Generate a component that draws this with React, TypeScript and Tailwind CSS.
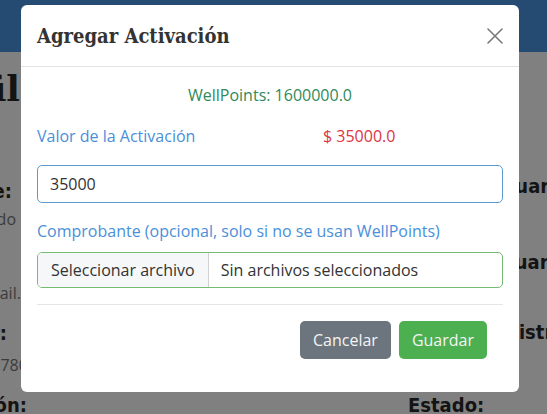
import React from 'react';

const sans = "font-['Open_Sans','Noto_Sans',sans-serif]";
const narrow = "font-['Liberation_Sans_Narrow','DejaVu_Sans_Condensed',sans-serif] font-bold";

function CloseIcon() {
  return (
    <svg width="16" height="16" viewBox="0 0 16 16" fill="none" stroke="#7a7a7a" strokeWidth="1.6" strokeLinecap="round">
      <path d="M1 1L15 15M15 1L1 15" />
    </svg>
  );
}

// page behind the dark backdrop (only the edges show)
function Backdrop() {
  return (
    <div className="flex h-full flex-col">
      <div className="h-[52px] shrink-0 bg-[#264b72]" />
      <div className="grid flex-1 grid-cols-[21px_1fr_139px]">
        <div className="flex flex-col text-[#141414]">
          <div className="mt-[16px] flex h-[40px] w-[20px] justify-end whitespace-nowrap font-['DejaVu_Serif',serif] text-[36px] font-bold leading-[40px]">
            Perfil
          </div>
          <div className={`mt-[71px] flex h-[24px] w-[12px] justify-end whitespace-nowrap text-[20px] leading-[24px] ${narrow}`}>
            Nombre:
          </div>
          <div className={`mt-[4px] flex h-[24px] w-[16px] justify-end whitespace-nowrap text-[16px] leading-[24px] text-[#3b3b3b] ${sans}`}>
            Ricardo
          </div>
          <div className={`mt-[50px] flex h-[24px] w-[53px] justify-end whitespace-nowrap text-[16px] leading-[24px] text-[#3b3b3b] ${sans}`}>
            usuario@gmail.com
          </div>
          <div className={`mt-[16px] flex h-[24px] w-[7px] justify-end whitespace-nowrap text-[20px] leading-[24px] ${narrow}`}>
            Celular:
          </div>
          <div className={`mt-[8px] flex h-[24px] w-[37px] justify-end whitespace-nowrap text-[16px] leading-[24px] text-[#3b3b3b] ${sans}`}>
            3124567809
          </div>
          <div className={`mt-[16px] flex h-[24px] w-[27px] justify-end whitespace-nowrap text-[20px] leading-[24px] ${narrow}`}>
            Dirección:
          </div>
        </div>
        <div />
        <div className={`flex flex-col text-[20px] leading-[24px] text-[#141414] ${narrow}`}>
          <div className="mt-[122px] ml-[82px] whitespace-nowrap">Usuario:</div>
          <div className="mt-[52px] ml-[92px] whitespace-nowrap">Guardián:</div>
          <div className="mt-[46px] ml-[72px] whitespace-nowrap">Registro:</div>
          <div className="mt-[49px] whitespace-nowrap">Estado:</div>
        </div>
      </div>
    </div>
  );
}

export default function App() {
  return (
    <div className="relative h-[414px] w-[547px] overflow-hidden bg-[#808080]">
      <Backdrop />

      <div className={`absolute left-[21px] top-[5px] w-[498px] rounded-md bg-white ${sans}`}>
        <div className="flex h-[62px] items-center justify-between border-b border-[#e3e3e3] px-4">
          <h2 className="font-['DejaVu_Serif_Condensed','DejaVu_Serif',serif] text-[20px] font-bold leading-[30px] text-[#333]">
            Agregar Activación
          </h2>
          <CloseIcon />
        </div>

        <div className="px-4 pt-4 pb-[33px] text-[16px] leading-[24px]">
          <p className="text-center text-[#318a5a]">WellPoints: 1600000.0</p>

          <div className="mt-[17px] grid grid-cols-[286px_1fr]">
            <span className="text-[#4a90d9]">Valor de la Activación</span>
            <span className="text-[#dc3545]">$ 35000.0</span>
          </div>

          <div className="mt-[17px] flex h-[38px] items-center rounded-[5px] border border-[#5b9bd5] px-3 text-[#333]">
            35000
          </div>

          <p className="mt-4 text-[#4a90d9]">Comprobante (opcional, solo si no se usan WellPoints)</p>

          <div className="mt-[9px] flex h-[36px] overflow-hidden rounded-[5px] border border-[#74bb74] text-[#333]">
            <span className="flex items-center border-r border-[#d0d0d0] bg-[#f6f7f8] px-[13px]">Seleccionar archivo</span>
            <span className="flex items-center px-3">Sin archivos seleccionados</span>
          </div>

          <div className="mt-4 border-t border-[#e5e5e5]" />

          <div className="mt-4 flex justify-end gap-2 pr-4">
            <button className="h-[38px] rounded-[5px] bg-[#6c757d] px-[13px] text-[#f4f4f4]">Cancelar</button>
            <button className="h-[38px] rounded-[5px] bg-[#4caf50] px-[13px] text-[#f4f4f4]">Guardar</button>
          </div>
        </div>
      </div>
    </div>
  );
}
